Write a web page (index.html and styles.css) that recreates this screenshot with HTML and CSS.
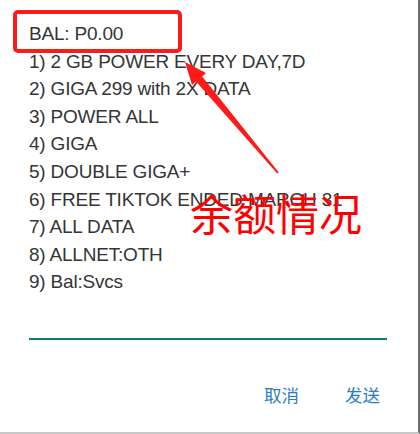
FILE: index.html
```html
<!DOCTYPE html>
<html lang="zh">
<head>
    <meta charset="UTF-8">
    <meta name="viewport" content="width=device-width, initial-scale=1.0">
    <title>USSD</title>
    <link rel="stylesheet" href="styles.css">
</head>
<body>
    <div class="dialog">
        <div class="message">
            <p>BAL: P0.00</p>
            <p>1) 2 GB POWER EVERY DAY,7D</p>
            <p>2) GIGA 299 with 2X DATA</p>
            <p>3) POWER ALL</p>
            <p>4) GIGA</p>
            <p>5) DOUBLE GIGA+</p>
            <p>6) FREE TIKTOK ENDED MARCH 31</p>
            <p>7) ALL DATA</p>
            <p>8) ALLNET:OTH</p>
            <p>9) Bal:Svcs</p>
        </div>
        <div class="input-line"></div>
        <div class="actions">
            <button class="btn">取消</button>
            <button class="btn">发送</button>
        </div>

        <!-- annotation overlay -->
        <div class="mark-box"></div>
        <svg class="mark-arrow" width="420" height="434" viewBox="0 0 420 434">
            <polygon points="185,62 206,73 202.2,76.4 278.8,172.4 277.2,173.6 196,81.6 192,85" fill="#ff1a1a"/>
        </svg>
        <div class="mark-label">余额情况</div>
    </div>
</body>
</html>
```

FILE: styles.css
```css
body {
    margin: 0;
    background-color: #fff;
}
.dialog {
    position: relative;
    width: 418px;
    height: 432px;
    border-right: 2px solid #707070;
    border-bottom: 2px solid #c8c8c8;
    background-color: #fff;
    overflow: hidden;
}
.message {
    padding: 20px 31px 0 29px;
    font-family: "Liberation Sans", Arial, sans-serif;
    font-size: 19px;
    letter-spacing: -0.2px;
    color: #353535;
}
.message p {
    margin: 0;
    line-height: 27.6px;
    white-space: nowrap;
}
.input-line {
    margin: 42px 31px 0 29px;
    height: 2px;
    background-color: #0e7d70;
}
.actions {
    display: flex;
    justify-content: flex-end;
    gap: 46px;
    margin-top: 43px;
    padding-right: 38px;
}
.btn {
    padding: 0;
    border: none;
    background: none;
    font-family: "Noto Sans CJK SC", sans-serif;
    font-size: 17.5px;
    line-height: 24px;
    color: #2b7dc4;
}
.mark-box {
    position: absolute;
    left: 13px;
    top: 10px;
    width: 161px;
    height: 35px;
    border: 4px solid #ff1a1a;
    border-radius: 5px;
}
.mark-arrow {
    position: absolute;
    left: 0;
    top: 0;
}
.mark-label {
    position: absolute;
    left: 190px;
    top: 191px;
    font-family: "Noto Sans CJK SC", sans-serif;
    font-size: 43px;
    line-height: 43px;
    color: #ff0000;
}
```
